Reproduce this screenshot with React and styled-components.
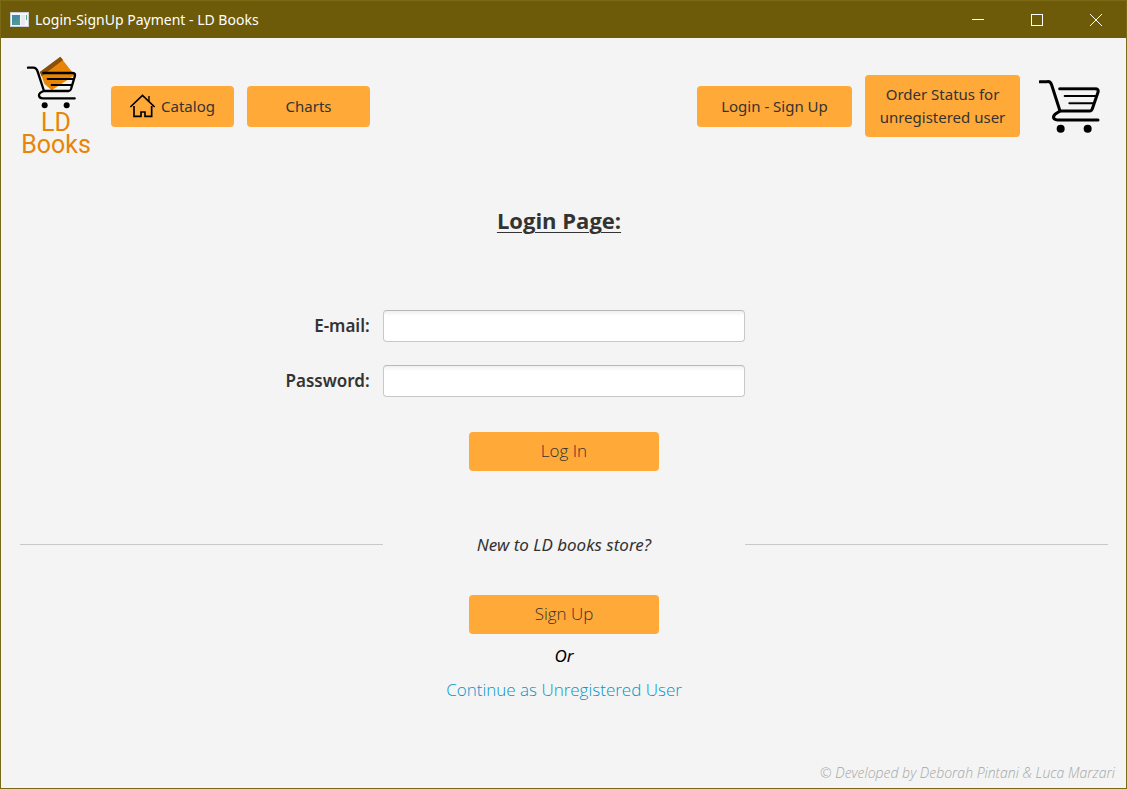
import React from "react";
import styled, { createGlobalStyle } from "styled-components";

const GlobalStyle = createGlobalStyle`
  *, *::before, *::after { box-sizing: border-box; }
  body {
    margin: 0;
    background: #f4f4f4;
    color: #333333;
    font-family: "Noto Sans", "Open Sans", sans-serif;
  }
`;

const Window = styled.div`
  display: flex;
  flex-direction: column;
  min-height: 100vh;
  border: 1px solid #7a6a16;
  background: #f4f4f4;
`;

const TitleBar = styled.div`
  display: flex;
  align-items: center;
  height: 37px;
  padding: 0 1px 0 9px;
  background: #6d5b0a;
  color: #ffffff;
`;

const WindowTitle = styled.span`
  flex: 1;
  margin-left: 6px;
  font-size: 14px;
  line-height: 20px;
`;

const WindowButton = styled.button`
  display: flex;
  align-items: center;
  justify-content: center;
  width: 59px;
  height: 36px;
  padding: 0;
  border: 0;
  background: transparent;
`;

const Header = styled.header`
  display: flex;
  align-items: center;
  padding: 18px 25px 0 20px;
`;

const Logo = styled.a`
  display: flex;
  flex-direction: column;
  align-items: center;
  gap: 2px;
  width: 70px;
  color: #e88504;
  font-family: Roboto, sans-serif;
  font-size: 25px;
  line-height: 22px;
  text-align: center;
  text-decoration: none;
`;

const ButtonGroup = styled.nav`
  display: flex;
  align-items: center;
  gap: 13px;
  margin-left: ${(p) => (p.$end ? "auto" : "20px")};
`;

const Button = styled.button`
  display: flex;
  align-items: center;
  justify-content: center;
  gap: 6px;
  width: ${(p) => p.$width}px;
  min-height: ${(p) => (p.$large ? 39 : 41)}px;
  padding: ${(p) => (p.$large ? "7px 4px 9px" : "8px 4px")};
  border: 0;
  border-radius: 4px;
  background: #ffa938;
  color: #333333;
  font-family: ${(p) => (p.$large ? '"Open Sans", sans-serif' : "inherit")};
  font-size: ${(p) => (p.$large ? 17 : 15)}px;
  font-weight: ${(p) => (p.$large ? 350 : 400)};
  line-height: 23px;
`;

const CartButton = styled.button`
  display: flex;
  margin-left: 19px;
  padding: 0;
  border: 0;
  background: transparent;
`;

const Main = styled.main`
  display: flex;
  flex-direction: column;
  flex: 1;
  align-items: center;
  padding: 47px 18px 0 19px;
`;

const Heading = styled.h1`
  margin: 0 0 73px;
  padding-right: 10px;
  font-family: "Open Sans", sans-serif;
  font-size: 22px;
  font-weight: 700;
  line-height: 34px;
  text-decoration: underline;
  text-decoration-thickness: 1px;
  text-underline-offset: 3px;
`;

const Form = styled.form`
  display: flex;
  flex-direction: column;
  align-items: center;
  gap: 23px;
  width: 100%;
`;

const Row = styled.div`
  display: grid;
  grid-template-columns: 1fr 1fr 1fr;
  align-items: center;
  width: 100%;
`;

const Label = styled.label`
  padding-right: 13px;
  font-size: 17px;
  font-weight: 600;
  line-height: 24px;
  text-align: right;
`;

const Field = styled.input`
  width: 100%;
  height: 32px;
  padding: 4px 8px;
  border: 1px solid #c8c8c8;
  border-top-color: #b8b8b8;
  border-radius: 4px;
  background: linear-gradient(#f0f0f0, #ffffff 5px);
  font: inherit;
  font-size: 17px;
`;

const Actions = styled.div`
  margin-top: 12px;
`;

const Divider = styled(Row)`
  margin: 62px 0 38px;
`;

const Rule = styled.hr`
  width: 100%;
  margin: 0 0 1px;
  border: 0;
  border-top: 1px solid #c8c8c8;
`;

const Note = styled.p`
  margin: 0;
  color: ${(p) => (p.$dark ? "#000000" : "#333333")};
  font-size: 17px;
  font-style: italic;
  line-height: 24px;
  text-align: center;
`;

const Alternatives = styled.div`
  display: flex;
  flex-direction: column;
  align-items: center;
  gap: 10px;
`;

const GuestLink = styled.a`
  color: #0096c9;
  font-family: "Open Sans", sans-serif;
  font-size: 17px;
  font-weight: 350;
  line-height: 24px;
  text-decoration: none;
`;

const Footer = styled.footer`
  padding: 0 11px 5px;
  color: #a6a6a6;
  font-family: "Open Sans", sans-serif;
  font-size: 14px;
  font-style: italic;
  font-weight: 300;
  line-height: 20px;
  text-align: right;
`;

function AppIcon() {
  return (
    <svg width="19" height="16" viewBox="0 0 19 16" aria-hidden="true">
      <rect x="0.5" y="0.5" width="18" height="14" fill="#f4f6f8" stroke="#c9cfd8" />
      <rect x="2" y="3" width="8" height="10" fill="#4d9a91" />
      <path d="M2 3h8v3L2 11z" fill="#4a82b0" opacity="0.6" />
      <rect x="11" y="3" width="4" height="10" fill="#e6e9ef" />
      <rect x="16" y="3" width="1" height="5" fill="#59ad6c" />
    </svg>
  );
}

function LogoMark() {
  return (
    <svg width="70" height="54" viewBox="33 33 210 162" fill="none" aria-hidden="true">
      <path d="M91 82 151 36 194 91 125 136 103 116z" fill="#e88504" />
      <path d="M89 81 151 35 159 45 95 94z" fill="#8a4f08" />
      <g stroke="#000" strokeWidth="7" strokeLinecap="round" strokeLinejoin="round">
        <path d="M54 68H68Q79 67 83 80L102 138H176Q181 138 183 132L195 92Q196 84 187 84H100" />
        <path d="M102 138Q87 143 87 151Q87 160 99 160H194" />
        <path d="M113 102H188M125 120H183" strokeWidth="6" />
      </g>
      <circle cx="104" cy="181" r="9" fill="#000" />
      <circle cx="170" cy="181" r="9" fill="#000" />
    </svg>
  );
}

function CartIcon() {
  return (
    <svg width="62" height="54" viewBox="28 28 186 162" fill="none" aria-hidden="true">
      <g stroke="#000" strokeWidth="9" strokeLinecap="round" strokeLinejoin="round">
        <path d="M31 36H52Q62 34 66 46L91 124H180Q186 124 188 117L205 68Q208 57 196 57H90" />
        <path d="M91 124L76 134Q69 141 73 147Q77 151 84 151H205" />
        <path d="M105 79H198M119 101H190" strokeWidth="6" />
      </g>
      <path d="M89 53H198M119 97H150" stroke="#b58a5c" strokeWidth="1" />
      <circle cx="93" cy="177" r="12" fill="#000" />
      <circle cx="174" cy="177" r="12" fill="#000" />
    </svg>
  );
}

function HomeIcon() {
  return (
    <svg width="25" height="24" viewBox="0 0 75 72" fill="none" stroke="#000" strokeWidth="5" aria-hidden="true">
      <path d="M1 39 37.500 4 74 39" />
      <path d="M57 6V22" strokeWidth="4" />
      <path d="M12 36V67H33V54H45V67H65V36" />
    </svg>
  );
}

export default function App() {
  return (
    <>
      <GlobalStyle />
      <Window>
        <TitleBar>
          <AppIcon />
          <WindowTitle>Login-SignUp Payment - LD Books</WindowTitle>
          <WindowButton aria-label="Minimize">
            <svg width="12" height="12" viewBox="0 0 12 12">
              <path d="M0 5.500H12" stroke="#fff" />
            </svg>
          </WindowButton>
          <WindowButton aria-label="Maximize">
            <svg width="12" height="12" viewBox="0 0 12 12">
              <rect x="0.5" y="0.5" width="11" height="11" fill="none" stroke="#fff" />
            </svg>
          </WindowButton>
          <WindowButton aria-label="Close">
            <svg width="12" height="12" viewBox="0 0 12 12">
              <path d="M0 0 12 12M12 0 0 12" stroke="#fff" />
            </svg>
          </WindowButton>
        </TitleBar>

        <Header>
          <Logo href="#home">
            <LogoMark />
            <span>
              LD
              <br />
              Books
            </span>
          </Logo>
          <ButtonGroup>
            <Button type="button" $width={123}>
              <HomeIcon />
              Catalog
            </Button>
            <Button type="button" $width={123}>Charts</Button>
          </ButtonGroup>
          <ButtonGroup $end>
            <Button type="button" $width={155}>Login - Sign Up</Button>
            <Button type="button" $width={155}>
              Order Status for
              <br />
              unregistered user
            </Button>
          </ButtonGroup>
          <CartButton type="button" aria-label="Cart">
            <CartIcon />
          </CartButton>
        </Header>

        <Main>
          <Heading>Login Page:</Heading>
          <Form onSubmit={(e) => e.preventDefault()}>
            <Row>
              <Label htmlFor="email">E-mail:</Label>
              <Field id="email" type="email" />
            </Row>
            <Row>
              <Label htmlFor="password">Password:</Label>
              <Field id="password" type="password" />
            </Row>
            <Actions>
              <Button type="submit" $width={190} $large>Log In</Button>
            </Actions>
          </Form>
          <Divider>
            <Rule />
            <Note>New to LD books store?</Note>
            <Rule />
          </Divider>
          <Alternatives>
            <Button type="button" $width={190} $large>Sign Up</Button>
            <Note $dark>Or</Note>
            <GuestLink href="#guest">Continue as Unregistered User</GuestLink>
          </Alternatives>
        </Main>

        <Footer>© Developed by Deborah Pintani &amp; Luca Marzari</Footer>
      </Window>
    </>
  );
}
